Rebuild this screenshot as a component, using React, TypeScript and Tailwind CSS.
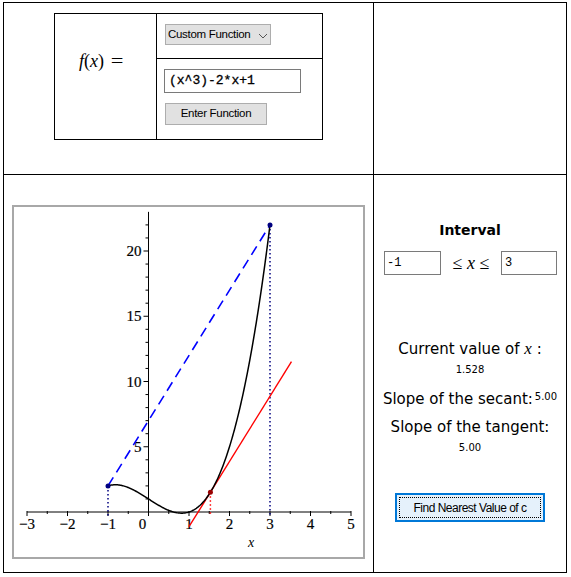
import React from "react";

const px = (x: number) => 134.5 + 40.5 * x;
const py = (y: number) => 305 - 13.05 * y;
const f = (x: number) => x * x * x - 2 * x + 1;

function Plot() {
  const pts: string[] = [];
  for (let i = 0; i <= 200; i++) {
    const x = -1 + (4 * i) / 200;
    pts.push(`${px(x).toFixed(2)},${py(f(x)).toFixed(2)}`);
  }
  const c = 1.528;
  const fc = f(c);
  const ax = px(0);
  const ay = py(0);
  const yTicks: React.ReactNode[] = [];
  for (let i = 1; i <= 22; i++) {
    const major = i % 5 === 0;
    yTicks.push(
      <line key={"y" + i} x1={ax - (major ? 5 : 3)} x2={ax} y1={py(i)} y2={py(i)} stroke="#000" strokeWidth={1} />
    );
  }
  const xTicks: React.ReactNode[] = [];
  for (let k = -6; k <= 10; k++) {
    const x = k / 2;
    const major = k % 2 === 0;
    xTicks.push(
      <line key={"x" + k} x1={px(x)} x2={px(x)} y1={ay - 1} y2={ay + (major ? 4 : 2)} stroke="#000" strokeWidth={1} />
    );
  }
  const xl = [-3, -2, -1, 1, 2, 3, 4, 5];
  return (
    <svg width={349} height={350} className="block">
      <line x1={px(-3)} x2={px(5)} y1={ay} y2={ay} stroke="#000" strokeWidth={1} />
      <line x1={ax} x2={ax} y1={py(23)} y2={ay + 4} stroke="#000" strokeWidth={1} />
      {yTicks}
      {xTicks}
      {xl.map((v) => (
        <text key={v} x={px(v)} y={ay + 17} textAnchor="middle" fontFamily="'Liberation Serif', serif" fontSize={15} stroke="#000" strokeWidth={0.2}>
          {v < 0 ? "\u2212" + Math.abs(v) : String(v)}
        </text>
      ))}
      <text x={ax - 6} y={ay + 17} textAnchor="middle" fontFamily="'Liberation Serif', serif" fontSize={15} stroke="#000" strokeWidth={0.2}>0</text>
      {[5, 10, 15, 20].map((v) => (
        <text key={v} x={ax - 7} y={py(v) + 5} textAnchor="end" fontFamily="'Liberation Serif', serif" fontSize={15} stroke="#000" strokeWidth={0.2}>
          {v}
        </text>
      ))}
      <text x={237} y={340} textAnchor="middle" fontFamily="'Liberation Serif', serif" fontStyle="italic" fontSize={14}>x</text>
      <line x1={px(-1)} x2={px(-1)} y1={py(2)} y2={ay + 4} stroke="#000080" strokeWidth={1.5} strokeDasharray="1.5 2.5" />
      <line x1={px(3)} x2={px(3)} y1={py(22)} y2={ay + 4} stroke="#000080" strokeWidth={1.5} strokeDasharray="1.5 2.5" />
      <line x1={px(c)} x2={px(c)} y1={py(fc)} y2={ay + 4} stroke="#ff0000" strokeWidth={1.5} strokeDasharray="1.5 2.5" />
      <line x1={px(-1)} y1={py(2)} x2={px(3)} y2={py(22)} stroke="#0000ff" strokeWidth={1.6} strokeDasharray="10 6" />
      <line x1={px(1.0)} y1={py(fc + 5 * (1.0 - c))} x2={px(3.53)} y2={py(fc + 5 * (3.53 - c))} stroke="#ff0000" strokeWidth={1.4} />
      <polyline points={pts.join(" ")} fill="none" stroke="#000" strokeWidth={1.5} />
      <circle cx={px(-1)} cy={py(2)} r={2.5} fill="#000080" />
      <circle cx={px(3)} cy={py(22)} r={2.5} fill="#000080" />
      <circle cx={px(c)} cy={py(fc)} r={2.5} fill="#990000" />
    </svg>
  );
}

export default function App() {
  return (
    <div className="bg-white w-[571px] h-[577px] pl-[3px] pt-[2px]">
      <div className="w-[564px] h-[571px] border border-black grid grid-cols-[370px_1fr] grid-rows-[172px_1fr]">
        <div className="border-r border-b border-black flex justify-center pt-[10px]">
          <div className="w-[269px] h-[127px] border border-black grid grid-cols-[102px_1fr] grid-rows-[45px_1fr]">
            <div className="row-span-2 border-r border-black pt-[34px] pl-[24px]">
              <span className="text-[18px] text-black whitespace-nowrap" style={{ fontFamily: "'Liberation Serif', serif" }}>
                <i>f</i>(<i>x</i>)<span className="ml-[8px] inline-block scale-x-125">=</span>
              </span>
            </div>
            <div className="border-b border-black pt-[10px] pl-[8px]">
              <div className="w-[106px] h-[21px] bg-[#e1e1e1] border border-[#adadad] flex items-center pl-[2px] text-[11.5px] text-black whitespace-nowrap" style={{ fontFamily: "'Liberation Sans', sans-serif" }}>
                <span className="tracking-[-0.3px]">Custom Function</span>
                <svg width="10" height="6" viewBox="0 0 10 6" className="ml-[8px] mt-[2px] shrink-0">
                  <path d="M1 1 L5 5 L9 1" fill="none" stroke="#555" strokeWidth="1" />
                </svg>
              </div>
            </div>
            <div className="pt-[10px] pl-[7px]">
              <div className="w-[137px] h-[24px] border border-[#7a7a7a] flex items-center pl-[4px] text-[13px] text-black whitespace-nowrap" style={{ fontFamily: "'Liberation Mono', monospace", WebkitTextStroke: "0.3px #000" }}>
                (x^3)-2*x+1
              </div>
              <div className="mt-[10px] ml-[1px] w-[102px] h-[22px] bg-[#e1e1e1] border border-[#adadad] flex items-center justify-center text-[11.5px] text-black whitespace-nowrap" style={{ fontFamily: "'Liberation Sans', sans-serif" }}>
                <span className="tracking-[-0.3px]">Enter Function</span>
              </div>
            </div>
          </div>
        </div>
        <div className="border-b border-black" />
        <div className="border-r border-black pl-[8px] pt-[30px]">
          <div className="w-[353px] h-[354px] border-2 border-[#a8a8a8] bg-white">
            <Plot />
          </div>
        </div>
        <div className="flex flex-col items-center text-black whitespace-nowrap" style={{ fontFamily: "'DejaVu Sans', sans-serif" }}>
          <div className="mt-[47px] h-[17px] leading-[17px] text-[14px] font-bold">Interval</div>
          <div className="mt-[12px] h-[24px] flex items-center w-full pl-[10px]">
            <div className="w-[57px] h-[24px] border border-[#7a7a7a] flex items-center pl-[2px] text-[12px]" style={{ fontFamily: "'Liberation Mono', monospace" }}>-1</div>
            <div className="w-[60px] text-center text-[18px]" style={{ fontFamily: "'Liberation Serif', serif" }}>
              ≤ <i>x</i> ≤
            </div>
            <div className="w-[56px] h-[24px] border border-[#7a7a7a] flex items-center pl-[3px] text-[12px]" style={{ fontFamily: "'Liberation Mono', monospace" }}>3</div>
          </div>
          <div className="mt-[65px] h-[18px] leading-[18px] text-[15px]">
            Current value of <i style={{ fontFamily: "'Liberation Serif', serif" }} className="text-[17px]">x</i> :
          </div>
          <div className="mt-[5px] h-[13px] leading-[13px] text-[10px]">1.528</div>
          <div className="mt-[14px] h-[18px] leading-[18px] text-[15px] flex items-start">
            <span>Slope of the secant:</span>
            <span className="text-[10px] leading-[13px] ml-[2px]">5.00</span>
          </div>
          <div className="mt-[10px] h-[18px] leading-[18px] text-[15px]">Slope of the tangent:</div>
          <div className="mt-[5px] h-[13px] leading-[13px] text-[10px]">5.00</div>
          <div className="mt-[39px] w-[150px] h-[29px] border-2 border-[#0078d7] bg-[#e5f1fb] p-[2px]">
            <div className="w-full h-full border border-dotted border-black flex items-center justify-center text-[12px]" style={{ fontFamily: "'Liberation Sans', sans-serif" }}>
              <span className="tracking-[-0.5px]">Find Nearest Value of c</span>
            </div>
          </div>
        </div>
      </div>
    </div>
  );
}
